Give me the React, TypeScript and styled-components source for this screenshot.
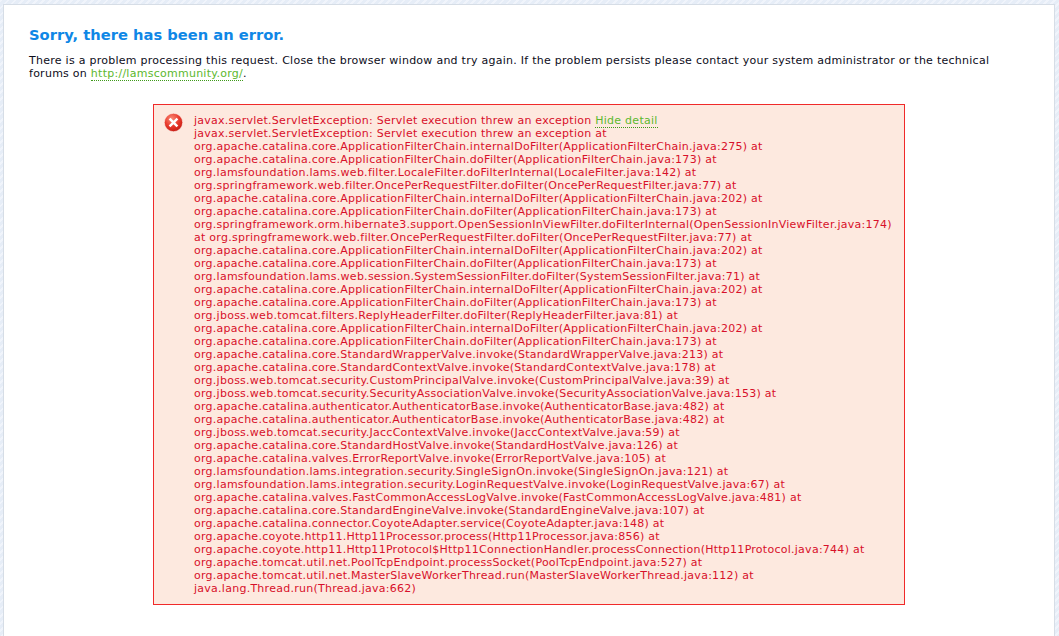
import styled, { createGlobalStyle } from "styled-components";

const trace = [
  "javax.servlet.ServletException: Servlet execution threw an exception at",
  "org.apache.catalina.core.ApplicationFilterChain.internalDoFilter(ApplicationFilterChain.java:275) at",
  "org.apache.catalina.core.ApplicationFilterChain.doFilter(ApplicationFilterChain.java:173) at",
  "org.lamsfoundation.lams.web.filter.LocaleFilter.doFilterInternal(LocaleFilter.java:142) at",
  "org.springframework.web.filter.OncePerRequestFilter.doFilter(OncePerRequestFilter.java:77) at",
  "org.apache.catalina.core.ApplicationFilterChain.internalDoFilter(ApplicationFilterChain.java:202) at",
  "org.apache.catalina.core.ApplicationFilterChain.doFilter(ApplicationFilterChain.java:173) at",
  "org.springframework.orm.hibernate3.support.OpenSessionInViewFilter.doFilterInternal(OpenSessionInViewFilter.java:174)",
  "at org.springframework.web.filter.OncePerRequestFilter.doFilter(OncePerRequestFilter.java:77) at",
  "org.apache.catalina.core.ApplicationFilterChain.internalDoFilter(ApplicationFilterChain.java:202) at",
  "org.apache.catalina.core.ApplicationFilterChain.doFilter(ApplicationFilterChain.java:173) at",
  "org.lamsfoundation.lams.web.session.SystemSessionFilter.doFilter(SystemSessionFilter.java:71) at",
  "org.apache.catalina.core.ApplicationFilterChain.internalDoFilter(ApplicationFilterChain.java:202) at",
  "org.apache.catalina.core.ApplicationFilterChain.doFilter(ApplicationFilterChain.java:173) at",
  "org.jboss.web.tomcat.filters.ReplyHeaderFilter.doFilter(ReplyHeaderFilter.java:81) at",
  "org.apache.catalina.core.ApplicationFilterChain.internalDoFilter(ApplicationFilterChain.java:202) at",
  "org.apache.catalina.core.ApplicationFilterChain.doFilter(ApplicationFilterChain.java:173) at",
  "org.apache.catalina.core.StandardWrapperValve.invoke(StandardWrapperValve.java:213) at",
  "org.apache.catalina.core.StandardContextValve.invoke(StandardContextValve.java:178) at",
  "org.jboss.web.tomcat.security.CustomPrincipalValve.invoke(CustomPrincipalValve.java:39) at",
  "org.jboss.web.tomcat.security.SecurityAssociationValve.invoke(SecurityAssociationValve.java:153) at",
  "org.apache.catalina.authenticator.AuthenticatorBase.invoke(AuthenticatorBase.java:482) at",
  "org.apache.catalina.authenticator.AuthenticatorBase.invoke(AuthenticatorBase.java:482) at",
  "org.jboss.web.tomcat.security.JaccContextValve.invoke(JaccContextValve.java:59) at",
  "org.apache.catalina.core.StandardHostValve.invoke(StandardHostValve.java:126) at",
  "org.apache.catalina.valves.ErrorReportValve.invoke(ErrorReportValve.java:105) at",
  "org.lamsfoundation.lams.integration.security.SingleSignOn.invoke(SingleSignOn.java:121) at",
  "org.lamsfoundation.lams.integration.security.LoginRequestValve.invoke(LoginRequestValve.java:67) at",
  "org.apache.catalina.valves.FastCommonAccessLogValve.invoke(FastCommonAccessLogValve.java:481) at",
  "org.apache.catalina.core.StandardEngineValve.invoke(StandardEngineValve.java:107) at",
  "org.apache.catalina.connector.CoyoteAdapter.service(CoyoteAdapter.java:148) at",
  "org.apache.coyote.http11.Http11Processor.process(Http11Processor.java:856) at",
  "org.apache.coyote.http11.Http11Protocol$Http11ConnectionHandler.processConnection(Http11Protocol.java:744) at",
  "org.apache.tomcat.util.net.PoolTcpEndpoint.processSocket(PoolTcpEndpoint.java:527) at",
  "org.apache.tomcat.util.net.MasterSlaveWorkerThread.run(MasterSlaveWorkerThread.java:112) at",
  "java.lang.Thread.run(Thread.java:662)",
];

const GlobalStyle = createGlobalStyle`
  html, body {
    margin: 0;
    height: 100%;
    overflow: hidden;
  }
  body {
    font-family: "DejaVu Sans", Verdana, sans-serif;
    font-size: 11px;
    letter-spacing: 0.26px;
    line-height: 13px;
    background-color: #e9eff8;
    background-image: repeating-linear-gradient(
      135deg,
      #f0f4fb 0,
      #f0f4fb 2px,
      #e6edf7 2px,
      #e6edf7 5px
    );
  }
`;

const Panel = styled.main`
  box-sizing: border-box;
  height: 632px;
  margin: 4px 4px 0 3px;
  padding: 20px 25px 0 25px;
  background: #ffffff;
  border: 1px solid #d6dde6;
  border-bottom: none;
`;

const Title = styled.h1`
  margin: 0;
  font-size: 14.7px;
  letter-spacing: 0;
  line-height: 20px;
  font-weight: 700;
  color: #0f87e6;
`;

const Intro = styled.p`
  margin: 9px 0 0 0;
  color: #0d0d1a;
`;

const TextLink = styled.a`
  color: #5cb82e;
  text-decoration: none;
  border-bottom: 1px dotted #3f9a1a;
`;

const ErrorBox = styled.section`
  box-sizing: border-box;
  display: flex;
  gap: 11px;
  width: 752px;
  height: 501px;
  margin: 24px 0 0 124px;
  padding: 8px 10px 0 10px;
  color: #d8102a;
  background: #fde9df;
  border: 1px solid #f02a2a;
`;

const ErrorIcon = styled.svg`
  flex: none;
  width: 19px;
  height: 19px;
`;

const Message = styled.div`
  padding-top: 1px;
  white-space: nowrap;
`;

function App() {
  return (
    <>
      <GlobalStyle />
      <Panel>
        <Title>Sorry, there has been an error.</Title>
        <Intro>
          There is a problem processing this request. Close the browser window and try again. If the problem persists please contact your system administrator or the technical
          <br />
          forums on <TextLink href="#">http://lamscommunity.org/</TextLink>.
        </Intro>
        <ErrorBox>
          <ErrorIcon viewBox="0 0 19 19">
            <defs>
              <radialGradient id="errorFill" cx="40%" cy="30%" r="75%">
                <stop offset="0" stopColor="#f98a76" />
                <stop offset="0.55" stopColor="#e8392c" />
                <stop offset="1" stopColor="#c31a12" />
              </radialGradient>
            </defs>
            <circle cx="9.5" cy="9.5" r="9.2" fill="url(#errorFill)" stroke="#fff6f2" strokeWidth="0.6" />
            <path d="M6.4 6.4l6.2 6.2M12.6 6.4l-6.2 6.2" stroke="#ffffff" strokeWidth="2.4" strokeLinecap="square" />
          </ErrorIcon>
          <Message>
            <div>
              javax.servlet.ServletException: Servlet execution threw an exception <TextLink href="#">Hide detail</TextLink>
            </div>
            {trace.map((line, i) => (
              <div key={i}>{line}</div>
            ))}
          </Message>
        </ErrorBox>
      </Panel>
    </>
  );
}

export default App;
